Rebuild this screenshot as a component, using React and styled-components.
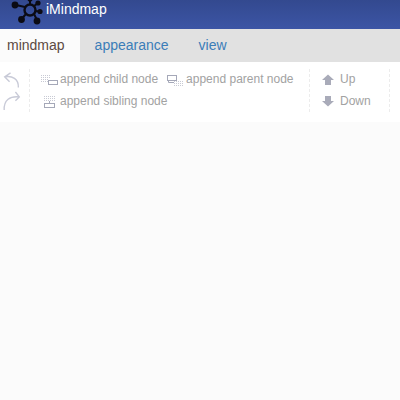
import React from "react";
import styled, { createGlobalStyle } from "styled-components";

const GlobalStyle = createGlobalStyle`
  html, body {
    margin: 0;
    padding: 0;
    height: 100%;
    background-color: #fbfbfb;
    font-family: "Liberation Sans", Arial, sans-serif;
  }
  #root {
    height: 100%;
  }
`;

const LogoIcon = () => (
  <svg width="46" height="29" viewBox="0 0 46 29">
    <g stroke="#0b0b14" strokeWidth="2" fill="none">
      <circle cx="30" cy="10" r="5.5" strokeWidth="2.4" />
      <path d="M25 7L16 5M26 14L21.5 19M34 6L38 3M30 4V0M35 11L40 11.5M34 14L37 20" />
    </g>
    <g fill="#0b0b14">
      <circle cx="15" cy="5" r="3.4" />
      <circle cx="21.5" cy="19.5" r="3.4" />
      <circle cx="37" cy="21" r="3.4" />
      <circle cx="40" cy="11.5" r="2.6" />
      <circle cx="38" cy="3" r="2.6" />
      <circle cx="30" cy="-1" r="2.6" />
    </g>
  </svg>
);

const UndoIcon = () => (
  <svg width="20" height="22" viewBox="0 0 20 22">
    <path
      d="M8.5 4L2.5 8L7.5 13M2.5 8C10 6.5 17 10 16.5 19"
      fill="none"
      stroke="#c8cad7"
      strokeWidth="1.4"
    />
  </svg>
);

const RedoIcon = () => (
  <svg width="20" height="22" viewBox="0 0 20 22">
    <path
      d="M13.5 1L17.5 6L13.5 10M17.5 6C8 5 1.5 9 2 19.5"
      fill="none"
      stroke="#c8cad7"
      strokeWidth="1.4"
    />
  </svg>
);

const ChildIcon = () => (
  <svg width="17" height="14" viewBox="0 0 17 14">
    <path d="M0 3.5H9M0 5.5H9M0 7.5H7M0 9.5H7" fill="none" stroke="#c8cad4" strokeDasharray="1 1" />
    <rect x="7.5" y="8.5" width="9" height="4" fill="#fff" stroke="#a5a8b8" />
  </svg>
);

const ParentIcon = () => (
  <svg width="17" height="14" viewBox="0 0 17 14">
    <rect x="0.5" y="3.5" width="9" height="5" fill="#fff" stroke="#a5a8b8" />
    <path d="M1.5 9V10.5H7" fill="none" stroke="#a5a8b8" />
    <path d="M7 9.5H16M7 11.5H16M7 13.5H16" fill="none" stroke="#c8cad4" strokeDasharray="1 1" />
  </svg>
);

const SiblingIcon = () => (
  <svg width="17" height="14" viewBox="0 0 17 14">
    <path d="M3 2.5H14M3 4.5H14M3 6.5H14" fill="none" stroke="#c8cad4" strokeDasharray="1 1" />
    <path d="M8.5 7V9" fill="none" stroke="#a5a8b8" />
    <rect x="3.5" y="9.5" width="10" height="4" fill="#fff" stroke="#a5a8b8" />
  </svg>
);

const ArrowIcon = ({ $down }) => (
  <svg width="12" height="11" viewBox="0 0 12 11" style={$down ? { transform: "scaleY(-1)" } : undefined}>
    <path d="M6 0.5L12 6H9V11H3V6H0Z" fill="#a9abb9" />
  </svg>
);

const Page = styled.div`
  display: flex;
  flex-direction: column;
  height: 100%;
  overflow: hidden;
`;

const TitleBar = styled.header`
  display: flex;
  align-items: flex-start;
  height: 29px;
  background: linear-gradient(to bottom, #33498f, #3c55a5);
`;

const Title = styled.span`
  color: #fff;
  font-size: 14px;
  line-height: 19px;
`;

const Tabs = styled.nav`
  display: flex;
  height: 33px;
  background-color: #e1e1e1;
`;

const Tab = styled.div`
  display: flex;
  align-items: center;
  box-sizing: border-box;
  height: 100%;
  padding: ${(p) => (p.$active ? "0 15px 2px 7px" : "0 15px 2px")};
  font-size: 14px;
  color: ${(p) => (p.$active ? "#5c4a42" : "#3b7db8")};
  background-color: ${(p) => (p.$active ? "#fbfbfb" : "transparent")};
`;

const Toolbar = styled.div`
  display: flex;
  height: 60px;
  background-color: #fff;
  padding-top: 7px;
  box-sizing: border-box;
`;

const Group = styled.div`
  display: flex;
  flex-direction: column;
  height: 43px;
  box-sizing: border-box;
  border-right: 1px dashed #ececec;
`;

const HistoryGroup = styled(Group)`
  align-items: center;
  width: 30px;
  padding-right: 6px;
`;

const NodeGroup = styled(Group)`
  width: 280px;
  padding: 1px 0 0 11px;
  gap: 4px;
`;

const MoveGroup = styled(Group)`
  width: 80px;
  padding: 1px 0 0 12px;
  gap: 4px;
`;

const Row = styled.div`
  display: flex;
  gap: 9px;
`;

const ToolButton = styled.div`
  display: flex;
  align-items: center;
  gap: 2px;
  height: 18px;
  font-size: 12px;
  color: #a2a2a2;
  white-space: nowrap;
`;

const MoveButton = styled(ToolButton)`
  gap: 6px;
`;

const Canvas = styled.main`
  flex: 1;
  background-color: #fbfbfb;
`;

export default function App() {
  return (
    <Page>
      <GlobalStyle />
      <TitleBar>
        <LogoIcon />
        <Title>iMindmap</Title>
      </TitleBar>
      <Tabs>
        <Tab $active>mindmap</Tab>
        <Tab>appearance</Tab>
        <Tab>view</Tab>
      </Tabs>
      <Toolbar>
        <HistoryGroup>
          <UndoIcon />
          <RedoIcon />
        </HistoryGroup>
        <NodeGroup>
          <Row>
            <ToolButton>
              <ChildIcon />
              append child node
            </ToolButton>
            <ToolButton>
              <ParentIcon />
              append parent node
            </ToolButton>
          </Row>
          <Row>
            <ToolButton>
              <SiblingIcon />
              append sibling node
            </ToolButton>
          </Row>
        </NodeGroup>
        <MoveGroup>
          <MoveButton>
            <ArrowIcon />
            Up
          </MoveButton>
          <MoveButton>
            <ArrowIcon $down />
            Down
          </MoveButton>
        </MoveGroup>
      </Toolbar>
      <Canvas />
    </Page>
  );
}
